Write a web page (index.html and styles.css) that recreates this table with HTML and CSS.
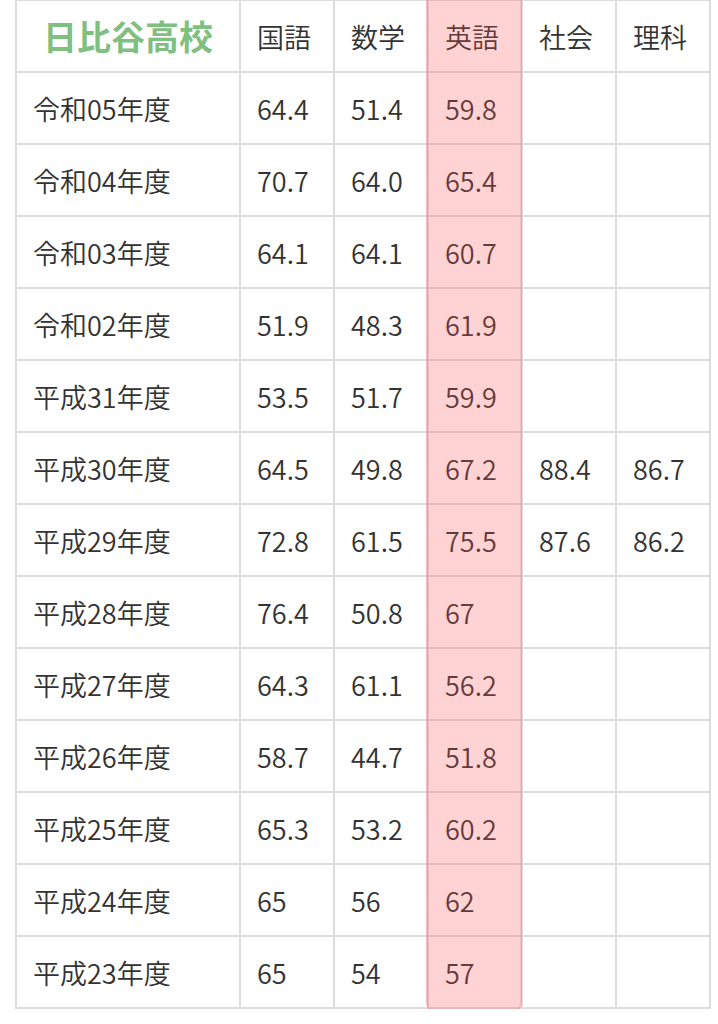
FILE: index.html
```html
<!DOCTYPE html>
<html lang="ja">
<head>
<meta charset="utf-8">
<link rel="stylesheet" href="styles.css">
</head>
<body>
<div class="wrap">
  <table class="scores">
    <colgroup>
      <col class="c-year"><col class="c-sub"><col class="c-sub"><col class="c-sub"><col class="c-sub"><col class="c-sub">
    </colgroup>
    <thead>
      <tr><th class="school">日比谷高校</th><th>国語</th><th>数学</th><th>英語</th><th>社会</th><th>理科</th></tr>
    </thead>
    <tbody>
      <tr><td>令和05年度</td><td>64.4</td><td>51.4</td><td>59.8</td><td></td><td></td></tr>
      <tr><td>令和04年度</td><td>70.7</td><td>64.0</td><td>65.4</td><td></td><td></td></tr>
      <tr><td>令和03年度</td><td>64.1</td><td>64.1</td><td>60.7</td><td></td><td></td></tr>
      <tr><td>令和02年度</td><td>51.9</td><td>48.3</td><td>61.9</td><td></td><td></td></tr>
      <tr><td>平成31年度</td><td>53.5</td><td>51.7</td><td>59.9</td><td></td><td></td></tr>
      <tr><td>平成30年度</td><td>64.5</td><td>49.8</td><td>67.2</td><td>88.4</td><td>86.7</td></tr>
      <tr><td>平成29年度</td><td>72.8</td><td>61.5</td><td>75.5</td><td>87.6</td><td>86.2</td></tr>
      <tr><td>平成28年度</td><td>76.4</td><td>50.8</td><td>67</td><td></td><td></td></tr>
      <tr><td>平成27年度</td><td>64.3</td><td>61.1</td><td>56.2</td><td></td><td></td></tr>
      <tr><td>平成26年度</td><td>58.7</td><td>44.7</td><td>51.8</td><td></td><td></td></tr>
      <tr><td>平成25年度</td><td>65.3</td><td>53.2</td><td>60.2</td><td></td><td></td></tr>
      <tr><td>平成24年度</td><td>65</td><td>56</td><td>62</td><td></td><td></td></tr>
      <tr><td>平成23年度</td><td>65</td><td>54</td><td>57</td><td></td><td></td></tr>
    </tbody>
  </table>
  <div class="highlight"></div>
</div>
</body>
</html>
```

FILE: styles.css
```css
html, body {
  margin: 0;
  padding: 0;
  background: #ffffff;
}

body {
  font-family: "Noto Sans CJK JP", "Noto Sans", sans-serif;
  color: #333333;
}

.wrap {
  position: relative;
  margin-left: 15px;
  margin-top: -1px;
  width: 694px;
}

.scores {
  border-collapse: collapse;
  table-layout: fixed;
  width: 694px;
}

.c-year { width: 224px; }
.c-sub { width: 94px; }

.scores th,
.scores td {
  border: 2px solid #dcdcdc;
  height: 72px;
  box-sizing: border-box;
  padding: 0 0 0 16px;
  text-align: left;
  vertical-align: middle;
  font-size: 27px;
  font-weight: 350;
  line-height: 1;
  white-space: nowrap;
}

.scores th.school {
  text-align: center;
  padding: 0;
  font-size: 34px;
  font-weight: 700;
  color: #7fbf7f;
}

.highlight {
  position: absolute;
  left: 411px;
  top: -12px;
  width: 96px;
  height: 1027px;
  box-sizing: border-box;
  background: rgba(255, 80, 80, 0.25);
  border: 2px solid rgba(215, 90, 90, 0.16);
  border-radius: 0 0 12px 12px;
  pointer-events: none;
}
```
